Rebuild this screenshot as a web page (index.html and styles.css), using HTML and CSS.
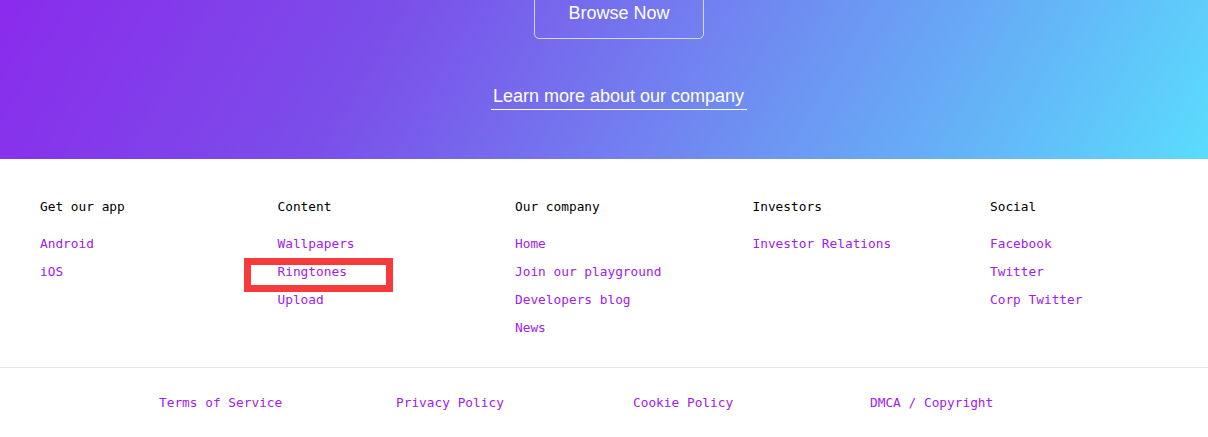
FILE: index.html
```html
<!DOCTYPE html>
<html lang="en">
<head>
<meta charset="utf-8">
<title>Footer</title>
<link rel="stylesheet" href="styles.css">
</head>
<body>
<section class="hero">
  <a class="btn-browse" href="#">Browse Now</a>
  <a class="learn" href="#">Learn more about our company</a>
</section>
<footer class="footer">
  <div class="cols">
    <div class="col">
      <h4 class="col-title">Get our app</h4>
      <ul class="links">
        <li><a href="#">Android</a></li>
        <li><a href="#">iOS</a></li>
      </ul>
    </div>
    <div class="col">
      <h4 class="col-title">Content</h4>
      <ul class="links">
        <li><a href="#">Wallpapers</a></li>
        <li><a class="highlight" href="#">Ringtones</a></li>
        <li><a href="#">Upload</a></li>
      </ul>
    </div>
    <div class="col">
      <h4 class="col-title">Our company</h4>
      <ul class="links">
        <li><a href="#">Home</a></li>
        <li><a href="#">Join our playground</a></li>
        <li><a href="#">Developers blog</a></li>
        <li><a href="#">News</a></li>
      </ul>
    </div>
    <div class="col">
      <h4 class="col-title">Investors</h4>
      <ul class="links">
        <li><a href="#">Investor Relations</a></li>
      </ul>
    </div>
    <div class="col">
      <h4 class="col-title">Social</h4>
      <ul class="links">
        <li><a href="#">Facebook</a></li>
        <li><a href="#">Twitter</a></li>
        <li><a href="#">Corp Twitter</a></li>
      </ul>
    </div>
  </div>
  <nav class="legal">
    <a href="#">Terms of Service</a>
    <a href="#">Privacy Policy</a>
    <a href="#">Cookie Policy</a>
    <a href="#">DMCA / Copyright</a>
  </nav>
</footer>
</body>
</html>
```

FILE: styles.css
```css
*, *::before, *::after { box-sizing: border-box; }
html, body { margin: 0; padding: 0; background: #fff; overflow: hidden; }
body { font-family: "DejaVu Sans Mono", "Liberation Mono", monospace; }

.hero {
  height: 159px;
  background: linear-gradient(120deg, #8a2bec 0%, #7b4de9 30%, #7280f0 55%, #66aef6 78%, #5adcfd 100%);
  display: flex;
  flex-direction: column;
  align-items: center;
  padding-left: 30px;
  font-family: "Liberation Sans", Arial, sans-serif;
}
.btn-browse {
  margin-top: -12px;
  width: 170px;
  padding: 14px 0;
  text-align: center;
  border: 1px solid rgba(230, 230, 235, 0.85);
  border-radius: 5px;
  color: #fff;
  text-decoration: none;
  font-size: 18px;
  line-height: 21px;
}
.learn {
  margin-top: 47px;
  color: #fff;
  text-decoration: none;
  font-size: 18px;
  line-height: 21px;
  padding: 0 3px 2px 2px;
  border-bottom: 1px solid #fff;
}

.footer { font-size: 12.8px; }
.cols {
  display: grid;
  grid-template-columns: repeat(5, 237.5px);
  padding: 38px 0 25px 40px;
  border-bottom: 1px solid #e6e6e6;
}
.col-title {
  margin: 0 0 13px;
  font-size: 12.8px;
  font-weight: normal;
  line-height: 20px;
  color: #000;
}
.links { list-style: none; margin: 0; padding: 0; }
.links li { line-height: 28px; }
.links a, .legal a { color: #a020f0; text-decoration: none; }

.highlight { position: relative; }
.highlight::after {
  content: "";
  position: absolute;
  left: -34px;
  top: -6px;
  width: 149px;
  height: 34px;
  border: 7px solid #f73a3a;
}

.legal {
  display: grid;
  grid-template-columns: repeat(4, 237px);
  padding: 25px 0 0 159px;
  line-height: 20px;
}
```
